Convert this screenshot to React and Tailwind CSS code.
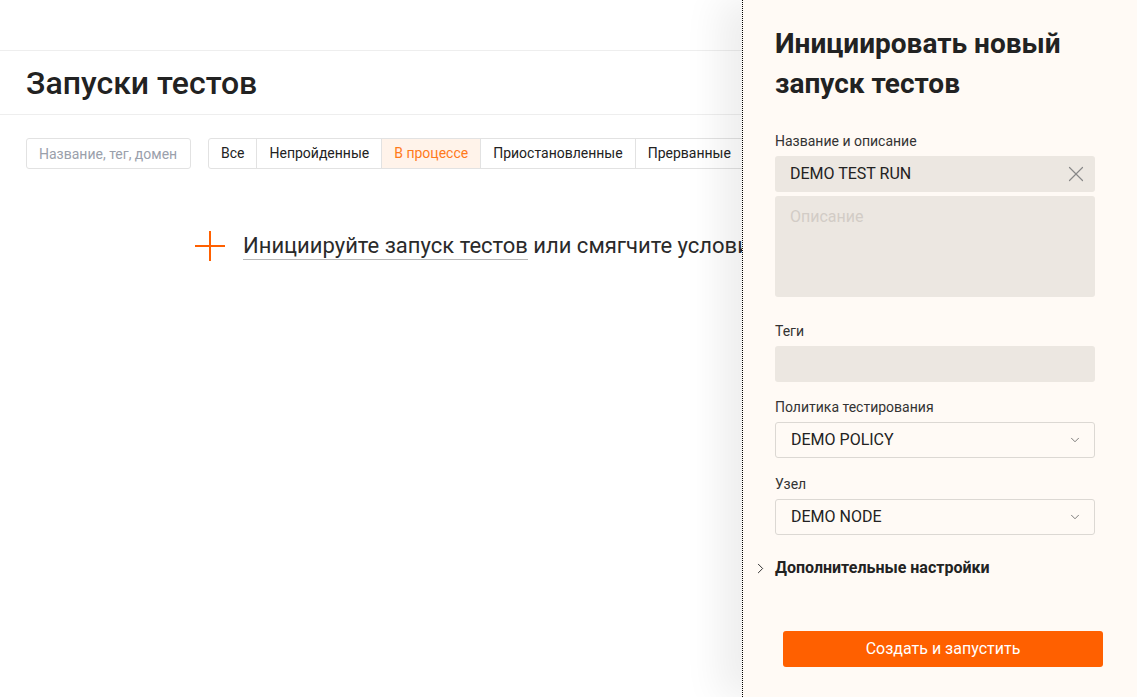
import React from "react";
import { X, ChevronDown, ChevronRight } from "lucide-react";

const tabs = ["Все", "Непройденные", "В процессе", "Приостановленные", "Прерванные"];

const Field = ({ label, children, className = "" }) => (
  <div className={className}>
    <div className="text-[14px] leading-[20px] text-[#333]">{label}</div>
    <div className="mt-[5px]">{children}</div>
  </div>
);

const Select = ({ value }) => (
  <div className="h-[36px] w-[320px] border border-[#dcd8d3] rounded-[3px] flex items-center justify-between pl-[15px] pr-[12px] text-[16px] text-[#222]">
    <span>{value}</span>
    <ChevronDown size={14} strokeWidth={1.3} className="text-[#555]" />
  </div>
);

export default function App() {
  return (
    <div
      className="relative w-[1137px] h-[697px] overflow-hidden bg-white text-[#222]"
      style={{ fontFamily: "Roboto, 'Noto Sans', sans-serif" }}
    >
      {/* Main page */}
      <div className="h-[51px] border-b border-[#eeeeee]" />
      <div className="h-[64px] border-b border-[#eeeeee] flex items-center px-[26px]">
        <h1 className="text-[32px] font-medium text-[#222] leading-none">Запуски тестов</h1>
      </div>

      <div className="flex items-start px-[26px] pt-[23px] gap-[17px]">
        <input
          placeholder="Название, тег, домен"
          className="w-[165px] h-[31px] border border-[#e2e2e2] rounded-[3px] px-[12px] text-[14px] placeholder-[#9aa0ab] outline-none"
        />
        <div className="flex h-[31px] border border-[#e2e2e2] rounded-[3px] text-[14px] whitespace-nowrap">
          {tabs.map((t, i) => (
            <div
              key={t}
              className={
                "flex items-center px-[12px] " +
                (i > 0 ? "border-l border-[#e2e2e2] " : "") +
                (t === "В процессе" ? "bg-[#fff3ea] text-[#ff7a1a]" : "text-[#222]")
              }
            >
              {t}
            </div>
          ))}
        </div>
      </div>

      <div className="flex items-center pl-[195px] mt-[62px] whitespace-nowrap">
        <svg width="30" height="30" viewBox="0 0 30 30" className="shrink-0">
          <path d="M15 0V30M0 15H30" stroke="#ff6000" strokeWidth="2" />
        </svg>
        <div className="ml-[18px] text-[22px] text-[#2a2a2a] leading-[28px]">
          <span className="border-b border-[#b8b8b8] pb-[1px]">Инициируйте запуск тестов</span>
          <span> или смягчите условия фильтрации</span>
        </div>
      </div>

      {/* Drawer */}
      <div className="absolute top-0 right-0 h-full w-[395px] bg-[#fffaf5] border-l border-dotted border-black shadow-[-22px_0_36px_rgba(0,0,0,0.07)]">
        <div className="pl-[32px] pt-[24px]">
          <h2 className="text-[28px] font-bold leading-[40px] text-[#222] w-[330px]">
            Инициировать новый запуск тестов
          </h2>

          <Field label="Название и описание" className="mt-[27px]">
            <div className="h-[36px] w-[320px] bg-[#ece7e1] rounded-[3px] flex items-center justify-between pl-[15px] pr-[6px] text-[16px] text-[#222]">
              <span>DEMO TEST RUN</span>
              <X size={26} strokeWidth={1.1} className="text-[#888]" />
            </div>
            <div className="mt-[4px] h-[101px] w-[320px] bg-[#ece7e1] rounded-[3px] pl-[15px] pt-[9px] text-[16px] text-[#d2ccc6]">
              Описание
            </div>
          </Field>

          <Field label="Теги" className="mt-[24px]">
            <div className="h-[36px] w-[320px] bg-[#ece7e1] rounded-[3px]" />
          </Field>

          <Field label="Политика тестирования" className="mt-[15px]">
            <Select value="DEMO POLICY" />
          </Field>

          <Field label="Узел" className="mt-[16px]">
            <Select value="DEMO NODE" />
          </Field>

          <div className="mt-[21px] flex items-center -ml-[23px]">
            <ChevronRight size={17} strokeWidth={1.4} className="text-[#333] mr-[6px]" />
            <span className="text-[16px] font-bold text-[#222]">Дополнительные настройки</span>
          </div>

          <button className="mt-[51px] ml-[8px] h-[36px] w-[320px] bg-[#ff6000] rounded-[3px] text-white text-[16px]">
            Создать и запустить
          </button>
        </div>
      </div>
    </div>
  );
}
